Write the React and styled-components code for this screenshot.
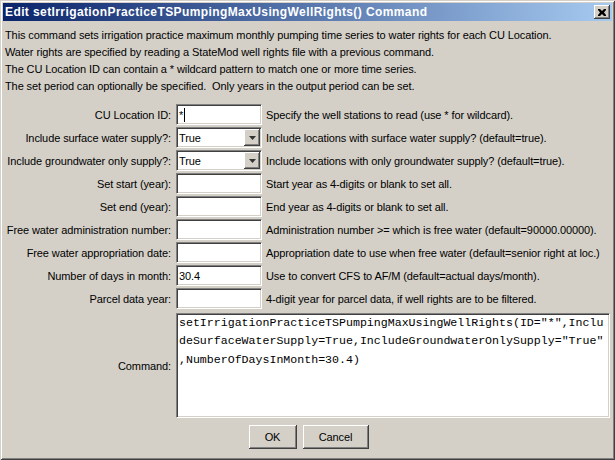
import React from 'react';
import styled, { createGlobalStyle } from 'styled-components';

const GlobalStyle = createGlobalStyle`
  html, body {
    margin: 0;
    padding: 0;
    background: #d4d0c8;
  }
`;

const rows = [
  { label: 'CU Location ID:', value: '*', help: 'Specify the well stations to read (use * for wildcard).', caret: true },
  { label: 'Include surface water supply?:', value: 'True', help: 'Include locations with surface water supply? (default=true).', combo: true },
  { label: 'Include groundwater only supply?:', value: 'True', help: 'Include locations with only groundwater supply? (default=true).', combo: true },
  { label: 'Set start (year):', value: '', help: 'Start year as 4-digits or blank to set all.' },
  { label: 'Set end (year):', value: '', help: 'End year as 4-digits or blank to set all.' },
  { label: 'Free water administration number:', value: '', help: 'Administration number >= which is free water (default=90000.00000).' },
  { label: 'Free water appropriation date:', value: '', help: 'Appropriation date to use when free water (default=senior right at loc.)' },
  { label: 'Number of days in month:', value: '30.4', help: 'Use to convert CFS to AF/M (default=actual days/month).' },
  { label: 'Parcel data year:', value: '', help: '4-digit year for parcel data, if well rights are to be filtered.' },
];

const description = [
  'This command sets irrigation practice maximum monthly pumping time series to water rights for each CU Location.',
  'Water rights are specified by reading a StateMod well rights file with a previous command.',
  'The CU Location ID can contain a * wildcard pattern to match one or more time series.',
  'The set period can optionally be specified.  Only years in the output period can be set.',
];

const commandText =
  'setIrrigationPracticeTSPumpingMaxUsingWellRights(ID="*",IncludeSurfaceWaterSupply=True,IncludeGroundwaterOnlySupply="True",NumberOfDaysInMonth=30.4)';

const App = () => {
  return (
    <>
      <GlobalStyle />
      <Window>
        <TitleBar>
          <Title>Edit setIrrigationPracticeTSPumpingMaxUsingWellRights() Command</Title>
          <CloseButton>
            <svg width="8" height="7" viewBox="0 0 8 7">
              <path d="M0 0h2l2 2 2-2h2v1L6 3.5 8 6v1H6L4 5 2 7H0V6l2-2.5L0 1z" fill="#000" />
            </svg>
          </CloseButton>
        </TitleBar>
        <Content>
          <Description>
            {description.map((line) => (
              <DescLine key={line}>{line}</DescLine>
            ))}
          </Description>
          <Form>
            {rows.map((row) => (
              <React.Fragment key={row.label}>
                <Label>{row.label}</Label>
                {row.combo ? (
                  <Combo>
                    <ComboValue>{row.value}</ComboValue>
                    <ArrowButton>
                      <svg width="7" height="4" viewBox="0 0 7 4">
                        <path d="M0 0h7L3.5 4z" fill="#333" />
                      </svg>
                    </ArrowButton>
                  </Combo>
                ) : (
                  <Field>
                    {row.value}
                    {row.caret && <Caret />}
                  </Field>
                )}
                <Help>{row.help}</Help>
              </React.Fragment>
            ))}
            <Label $shift>Command:</Label>
            <CommandArea>{commandText}</CommandArea>
          </Form>
          <Buttons>
            <Button $w={48}>OK</Button>
            <Button $w={66}>Cancel</Button>
          </Buttons>
        </Content>
      </Window>
    </>
  );
};

const Window = styled.div`
  width: 615px;
  height: 460px;
  box-sizing: border-box;
  padding: 3px;
  background: #d4d0c8;
  display: flex;
  flex-direction: column;
  box-shadow: inset 1px 1px 0 #d4d0c8, inset -1px -1px 0 #404040,
    inset 2px 2px 0 #ffffff, inset -2px -2px 0 #808080;
  font-family: "Liberation Sans", Arial, sans-serif;
  font-size: 11px;
  letter-spacing: -0.1px;
  color: #000;
`;

const TitleBar = styled.div`
  height: 18px;
  display: flex;
  align-items: center;
  justify-content: space-between;
  padding: 0 2px;
  background: linear-gradient(to right, #0a246a 0%, #a6caf0 100%);
`;

const Title = styled.div`
  color: #fff;
  font-weight: bold;
  font-size: 12px;
  letter-spacing: 0.4px;
  white-space: nowrap;
`;

const CloseButton = styled.div`
  width: 16px;
  height: 14px;
  box-sizing: border-box;
  background: #d4d0c8;
  display: flex;
  align-items: center;
  justify-content: center;
  box-shadow: inset -1px -1px 0 #404040, inset 1px 1px 0 #ffffff,
    inset -2px -2px 0 #808080;
`;

const Content = styled.div`
  flex: 1;
  display: flex;
  flex-direction: column;
  padding: 6px 2px 0 0;
`;

const Description = styled.div`
  padding-left: 2px;
`;

const DescLine = styled.div`
  line-height: 17px;
  white-space: pre;
`;

const Form = styled.div`
  margin-top: 9px;
  display: grid;
  grid-template-columns: 169px 86px minmax(0, 1fr);
  grid-template-rows: repeat(9, 21px) 107px;
  column-gap: 4px;
  row-gap: 2px;
`;

const Label = styled.div`
  display: flex;
  align-items: center;
  justify-content: flex-end;
  padding-right: 1px;
  white-space: nowrap;
  ${(p) => p.$shift && 'padding-top: 2px;'}
`;

const sunken = `
  box-sizing: border-box;
  background: #fff;
  border-top: 1px solid #808080;
  border-left: 1px solid #808080;
  border-bottom: 1px solid #ffffff;
  border-right: 1px solid #ffffff;
  box-shadow: inset 1px 1px 0 #404040, inset -1px -1px 0 #d4d0c8;
`;

const Field = styled.div`
  ${sunken}
  height: 21px;
  display: flex;
  align-items: center;
  padding: 0 2px;
  white-space: nowrap;
`;

const Caret = styled.span`
  width: 1px;
  height: 14px;
  background: #000;
  margin-left: 1px;
`;

const Combo = styled.div`
  ${sunken}
  height: 21px;
  display: flex;
  align-items: stretch;
  padding: 1px;
`;

const ComboValue = styled.div`
  flex: 1;
  display: flex;
  align-items: center;
  padding-left: 1px;
`;

const ArrowButton = styled.div`
  width: 16px;
  box-sizing: border-box;
  background: #d4d0c8;
  display: flex;
  align-items: center;
  justify-content: center;
  box-shadow: inset -1px -1px 0 #404040, inset 1px 1px 0 #ffffff,
    inset -2px -2px 0 #808080;
`;

const Help = styled.div`
  display: flex;
  align-items: center;
  white-space: nowrap;
`;

const CommandArea = styled.div`
  ${sunken}
  grid-column: 2 / span 2;
  height: 105px;
  margin-top: 2px;
  padding: 0 1px 0 2px;
  font-family: "Liberation Mono", "Courier New", monospace;
  font-size: 11.6px;
  letter-spacing: 0;
  line-height: 18.3px;
  line-break: anywhere;
  word-break: break-all;
  overflow: hidden;
`;

const Buttons = styled.div`
  margin-top: 7px;
  display: flex;
  justify-content: center;
  gap: 6px;
  padding-left: 4px;
`;

const Button = styled.div`
  width: ${(p) => p.$w}px;
  height: 24px;
  box-sizing: border-box;
  display: flex;
  align-items: center;
  justify-content: center;
  background: #d4d0c8;
  box-shadow: inset -1px -1px 0 #404040, inset 1px 1px 0 #ffffff,
    inset -2px -2px 0 #808080;
`;

export default App;
